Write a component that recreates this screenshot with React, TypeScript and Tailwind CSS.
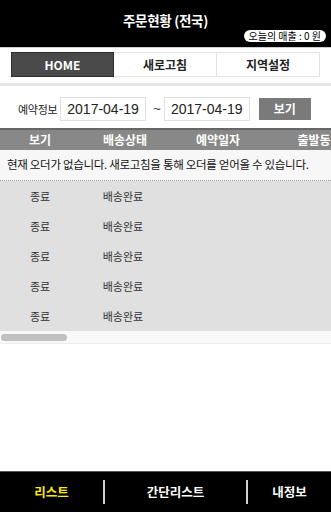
const rows = ['종료', '종료', '종료', '종료', '종료']

const columns = [
  { label: '보기', width: 'w-[80px]' },
  { label: '배송상태', width: 'w-[90px]' },
  { label: '예약일자', width: 'w-[96px]' },
  { label: '출발동', width: 'w-[96px]' }
]

const tabs = ['HOME', '새로고침', '지역설정']

const navItems = ['리스트', '간단리스트', '내정보']

export default function App() {
  return (
    <div className="flex h-[512px] w-[331px] flex-col overflow-hidden bg-white font-['Noto_Sans_CJK_KR','Noto_Sans',sans-serif]">
      {/* header */}
      <div className="relative flex h-[47px] shrink-0 items-start justify-center bg-black pt-[10px]">
        <span className="text-[13.5px] leading-[20px] font-bold tracking-[-0.3px] text-white">주문현황 (전국)</span>
        <span className="absolute right-[5px] bottom-[5px] rounded-full bg-white px-[5px] text-[10px] leading-[12px] text-black">
          오늘의 매출 : 0 원
        </span>
      </div>

      {/* tabs */}
      <div className="shrink-0 border-t border-[#cfcfcf] px-[11px] pt-[4px] pb-[6px]">
        <div className="grid grid-cols-3">
          {tabs.map((t, i) => (
            <div
              key={t}
              className={
                i === 0
                  ? 'flex h-[25px] items-center justify-center border border-[#2e2e2e] bg-[#4a4a4a] text-[12px] font-bold text-white'
                  : 'flex h-[25px] items-center justify-center border border-l-0 border-[#e2e2e2] bg-white text-[12px] font-bold text-[#222]'
              }
            >
              {t}
            </div>
          ))}
        </div>
      </div>
      <div className="h-[3px] shrink-0 bg-[#e6e6e6]" />

      {/* date search */}
      <div className="flex h-[42px] shrink-0 items-center pt-[4px] pl-[18px]">
        <span className="mr-[3px] text-[11px] tracking-[-0.3px] text-[#222]">예약정보</span>
        <div className="flex h-[24px] w-[86px] items-center border border-[#e0e0e0] pl-[6px] font-['Liberation_Sans',sans-serif] text-[14px] text-[#222]">
          2017-04-19
        </div>
        <span className="mr-[3px] ml-[7px] font-['Liberation_Sans',sans-serif] text-[13px] text-[#333]">~</span>
        <div className="flex h-[24px] w-[86px] items-center border border-[#e0e0e0] pl-[6px] font-['Liberation_Sans',sans-serif] text-[14px] text-[#222]">
          2017-04-19
        </div>
        <div className="ml-[9px] flex h-[22px] w-[52px] items-center justify-center bg-[#7a7a7a] text-[12px] font-bold text-white">
          보기
        </div>
      </div>

      {/* table */}
      <div className="shrink-0 overflow-hidden">
        <div className="w-[420px]">
          <div className="flex h-[22px] items-center border-t-2 border-[#666] bg-[#888] text-[12px] font-bold text-white">
            {columns.map(c => (
              <div key={c.label} className={`${c.width} shrink-0 text-center`}>
                {c.label}
              </div>
            ))}
          </div>
          <div className="flex h-[31px] w-[331px] items-center border-b border-dotted border-[#9a9a9a] bg-[#f7f7f7] pl-[7px] text-[11.5px] tracking-[-0.3px] text-[#111]">
            현재 오더가 없습니다. 새로고침을 통해 오더를 얻어올 수 있습니다.
          </div>
          <div className="bg-[#e0e0e0]">
            {rows.map((r, i) => (
              <div key={i} className="flex h-[30px] items-center text-[11px] text-[#333]">
                <div className="w-[80px] shrink-0 text-center">{r}</div>
                <div className="w-[86px] shrink-0 text-center">배송완료</div>
              </div>
            ))}
          </div>
        </div>
        {/* horizontal scrollbar */}
        <div className="flex h-[13px] items-center border-b border-[#eeeeee] bg-[#f8f8f8] px-[1px]">
          <div className="h-[7px] w-[66px] rounded-full bg-[#c1c1c1]" />
        </div>
      </div>

      <div className="flex-1" />

      {/* bottom nav */}
      <div className="flex h-[41px] shrink-0 items-center border-t border-[#555] bg-black">
        {navItems.map((n, i) => (
          <div key={n} className="flex items-center">
            {i > 0 && <div className="h-[24px] w-[2px] bg-[#d0d0d0]" />}
            <div
              className={
                (i === 0 ? 'w-[103px] text-[#ffea00] ' : i === 1 ? 'w-[141px] text-white ' : 'w-[83px] text-white ') +
                'text-center text-[12.5px] font-bold'
              }
            >
              {n}
            </div>
          </div>
        ))}
      </div>
    </div>
  )
}
